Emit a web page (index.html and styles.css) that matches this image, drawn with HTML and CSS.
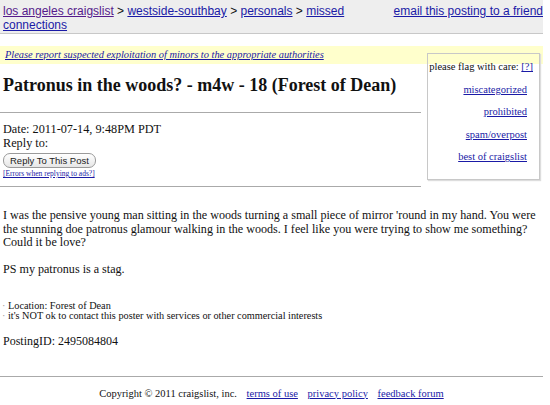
FILE: index.html
```html
<!DOCTYPE html>
<html>
<head>
<meta charset="utf-8">
<link rel="stylesheet" href="styles.css">
</head>
<body>
<div class="page">
  <div class="topbar">
    <div class="crumbs"><a class="visited" href="#">los angeles craigslist</a> &gt; <a href="#">westside-southbay</a> &gt; <a href="#">personals</a> &gt; <a href="#">missed</a><br><a href="#">connections</a></div>
    <div class="email"><a href="#">email this posting to a friend</a></div>
  </div>
  <div class="warn"><a href="#">Please report suspected exploitation of minors to the appropriate authorities</a></div>
  <div class="main">
    <div class="left">
      <h2 class="title">Patronus in the woods? - m4w - 18 (Forest of Dean)</h2>
      <hr class="rule">
      <div class="meta">Date: 2011-07-14, 9:48PM PDT<br>Reply to:</div>
      <button class="reply">Reply To This Post</button>
      <div class="errors"><a href="#">[Errors when replying to ads?]</a></div>
      <hr class="rule rule2">
    </div>
    <div class="flags">
      <div class="flaghead">please flag with care: <a href="#">[?]</a></div>
      <a href="#">miscategorized</a>
      <a href="#">prohibited</a>
      <a href="#">spam/overpost</a>
      <a href="#">best of craigslist</a>
    </div>
  </div>
  <div class="body">I was the pensive young man sitting in the woods turning a small piece of mirror 'round in my hand. You were the stunning doe patronus glamour walking in the woods. I feel like you were trying to show me something? Could it be love?<br><br>PS my patronus is a stag.</div>
  <ul class="notes">
    <li>Location: Forest of Dean</li>
    <li>it's NOT ok to contact this poster with services or other commercial interests</li>
  </ul>
  <div class="pid">PostingID: 2495084804</div>
  <hr class="footrule">
  <div class="footer">Copyright © 2011 craigslist, inc. <a href="#">terms of use</a> <a href="#">privacy policy</a> <a href="#">feedback forum</a></div>
</div>
</body>
</html>
```
FILE: styles.css
```css
html, body { margin: 0; padding: 0; background: #fff; }
body { font-family: "Liberation Serif", "Times New Roman", serif; color: #111; }
a { color: #1a1aa6; }
a.visited { color: #551a8b; }
.page { width: 543px; }
.topbar {
  display: flex; justify-content: space-between; align-items: flex-start;
  background: #eeeeee; border-bottom: 1px solid #c8c8c8;
  font-family: "Liberation Sans", Arial, sans-serif; font-size: 12px; line-height: 13.5px;
  padding: 5px 0 2px 3px; height: 26px;
}
.crumbs { width: 360px; }
.email { white-space: nowrap; }
.warn {
  margin-top: 12px; background: #ffffcc; height: 18px; line-height: 18px;
  font-size: 10.4px; font-style: italic; padding-left: 5px;
}
.main { display: flex; justify-content: space-between; }
.left { width: 421px; padding-top: 10px; }
.title { font-size: 18px; font-weight: bold; margin: 0 0 0 3px; line-height: 22px; }
.rule { border: 0; border-top: 1px solid #aaa; margin: 16px 0 0 0; height: 0; }
.meta { font-size: 12.25px; line-height: 14px; padding: 9px 0 0 3px; }
.reply {
  margin: 2px 0 0 3px; font-family: "Liberation Sans", Arial, sans-serif; font-size: 9.5px;
  border: 1px solid #9a9a9a; border-radius: 7px; background: linear-gradient(#fff, #e6e6e6);
  padding: 1px 6px; height: 15px; line-height: 11px; color: #222;
}
.errors { font-size: 7.5px; padding-left: 3px; margin-top: 1px; }
.rule2 { margin-top: 8px; }
.flags {
  margin-top: -11px; margin-right: 3px; height: 127px; border: 1px solid #c8c8c8; box-shadow: 1px 1px 1px #ddd;
  display: flex; flex-direction: column; align-items: flex-end; font-size: 10.5px; line-height: 12px;
  padding: 7px 12px 0 0; box-sizing: border-box; width: 113px; gap: 10.6px;
}
.flaghead { margin-right: -6px; }
.body { font-size: 12.1px; line-height: 13.5px; padding: 22px 0 0 3px; }
.notes { font-size: 10.25px; line-height: 10.5px; margin: 24px 0 0 0; padding-left: 8px; list-style: none; }
.notes li { position: relative; }
.notes li::before { content: "·"; position: absolute; left: -6px; color: #999; }
.pid { font-size: 12px; margin: 12px 0 0 3px; }
.footrule { border: 0; border-top: 1px solid #aaa; margin: 27px 0 0 0; height: 0; }
.footer { font-size: 10.5px; text-align: center; padding: 11px 0 0 0; }
.footer a { margin-left: 7px; }
```
